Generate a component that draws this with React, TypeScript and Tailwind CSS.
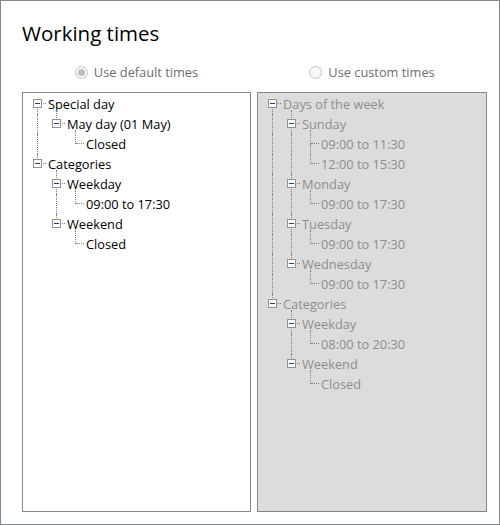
import React from "react"

type Node = { label: string; children?: Node[] }

const defaultTree: Node[] = [
  {
    label: "Special day",
    children: [{ label: "May day (01 May)", children: [{ label: "Closed" }] }],
  },
  {
    label: "Categories",
    children: [
      { label: "Weekday", children: [{ label: "09:00 to 17:30" }] },
      { label: "Weekend", children: [{ label: "Closed" }] },
    ],
  },
]

const customTree: Node[] = [
  {
    label: "Days of the week",
    children: [
      { label: "Sunday", children: [{ label: "09:00 to 11:30" }, { label: "12:00 to 15:30" }] },
      { label: "Monday", children: [{ label: "09:00 to 17:30" }] },
      { label: "Tuesday", children: [{ label: "09:00 to 17:30" }] },
      { label: "Wednesday", children: [{ label: "09:00 to 17:30" }] },
    ],
  },
  {
    label: "Categories",
    children: [
      { label: "Weekday", children: [{ label: "08:00 to 20:30" }] },
      { label: "Weekend", children: [{ label: "Closed" }] },
    ],
  },
]

type Row = {
  label: string
  level: number
  first: boolean
  hasNext: boolean
  hasChildren: boolean
  through: boolean[]
}

function flatten(nodes: Node[], level = 0, through: boolean[] = []): Row[] {
  const rows: Row[] = []
  nodes.forEach((n, i) => {
    const hasNext = i < nodes.length - 1
    rows.push({
      label: n.label,
      level,
      first: i === 0,
      hasNext,
      hasChildren: !!n.children?.length,
      through,
    })
    if (n.children) rows.push(...flatten(n.children, level + 1, [...through, hasNext]))
  })
  return rows
}

function TreeRow({ row, disabled }: { row: Row; disabled?: boolean }) {
  const line = "border-dotted border-[#7f7f7f]"
  return (
    <div className="flex h-5 items-center">
      {row.through.map((t, j) => (
        <div key={j} className="relative h-5 w-[19px] shrink-0">
          {t && <div className={`absolute left-[9px] top-0 h-5 border-l ${line}`} />}
        </div>
      ))}
      <div className="relative h-5 w-[19px] shrink-0">
        {(row.level > 0 || !row.first) && (
          <div
            className={`absolute left-[9px] ${row.first ? "top-[-4px] h-[14px]" : "top-0 h-[10px]"} border-l ${line}`}
          />
        )}
        {row.hasNext && <div className={`absolute left-[9px] top-[10px] h-[10px] border-l ${line}`} />}
        <div className={`absolute left-[10px] right-[1px] top-[9px] border-t ${line}`} />
        {row.hasChildren && (
          <div className="absolute left-[5px] top-[5px] flex h-[9px] w-[9px] items-center justify-center border border-[#919191] bg-white">
            <div className="h-px w-[5px] bg-[#1e3f8f]" />
          </div>
        )}
      </div>
      <span className={`whitespace-nowrap pl-px ${disabled ? "text-[#8e8e8e]" : "text-black"}`}>
        {row.label}
      </span>
    </div>
  )
}

function Radio({ label, checked }: { label: string; checked?: boolean }) {
  return (
    <div className="flex h-5 items-center justify-center gap-[6px] text-[#6d6d6d]">
      <div className="flex h-[13px] w-[13px] items-center justify-center rounded-full border border-[#c4c4c4] bg-[#f7f7f7]">
        {checked && <div className="h-[7px] w-[7px] rounded-full bg-[#bdbdbd]" />}
      </div>
      <span>{label}</span>
    </div>
  )
}

export default function App() {
  const left = flatten(defaultTree)
  const right = flatten(customTree)
  return (
    <div
      className="h-[525px] w-[500px] border border-[#828790] bg-white text-[12.8px] leading-5"
      style={{ fontFamily: '"Open Sans", "Noto Sans", sans-serif' }}
    >
      <div className="pl-[21px] pr-[12px] pt-[18px]">
        <h1 className="text-[20.5px] font-medium leading-[28px] text-black">Working times</h1>

        <div className="mt-[15px] grid grid-cols-[229px_230px] gap-x-[6px]">
          <Radio label="Use default times" checked />
          <Radio label="Use custom times" />
        </div>

        <div className="mt-[10px] grid grid-cols-[229px_230px] gap-x-[6px]">
          <div className="h-[420px] border border-[#828790] bg-white pl-[5px] pt-px">
            {left.map((r, i) => (
              <TreeRow key={i} row={r} />
            ))}
          </div>
          <div className="h-[420px] border border-[#828790] bg-[#dcdcdc] pl-[5px] pt-px">
            {right.map((r, i) => (
              <TreeRow key={i} row={r} disabled />
            ))}
          </div>
        </div>
      </div>
    </div>
  )
}
